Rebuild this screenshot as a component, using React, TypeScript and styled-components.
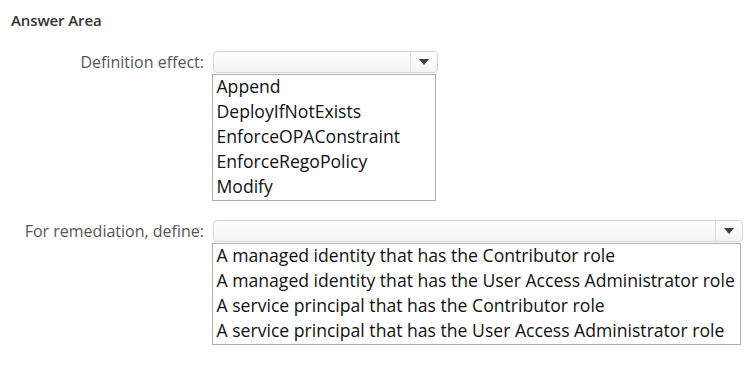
import React from 'react';
import styled, { createGlobalStyle } from 'styled-components';

const GlobalStyle = createGlobalStyle`
  html, body {
    margin: 0;
    padding: 0;
    background: #ffffff;
  }
  body {
    font-family: 'Open Sans', 'Noto Sans', Arial, sans-serif;
  }
`;

const Page = styled.div`
  width: 756px;
  height: 366px;
  box-sizing: border-box;
  padding: 10px 0 0 11px;
  background: #ffffff;
`;

const Title = styled.div`
  font-size: 15px;
  font-weight: 600;
  color: #333333;
  line-height: 21px;
  letter-spacing: -0.1px;
`;

const Form = styled.div`
  display: flex;
  flex-direction: column;
  gap: 19px;
  margin-top: 20px;
`;

const Field = styled.div`
  display: grid;
  grid-template-columns: 193px auto;
  column-gap: 8px;
  align-items: start;
`;

const Label = styled.div`
  text-align: right;
  font-size: 16px;
  color: #555555;
  line-height: 22px;
`;

const Control = styled.div<{ $width: number }>`
  display: flex;
  flex-direction: column;
  width: ${(p) => p.$width}px;
`;

const Select = styled.div`
  display: flex;
  height: 22px;
  box-sizing: border-box;
  margin-left: 1px;
  border: 1px solid #d4d4d4;
  border-radius: 4px;
  background: linear-gradient(#ffffff, #f3f3f3);
`;

const SelectValue = styled.div`
  flex: 1;
`;

const ArrowButton = styled.div`
  width: 26px;
  display: flex;
  align-items: center;
  justify-content: center;
  border-left: 1px solid #dcdcdc;
`;

const Arrow = styled.div`
  width: 0;
  height: 0;
  border-left: 5.5px solid transparent;
  border-right: 5.5px solid transparent;
  border-top: 6px solid #404040;
`;

const List = styled.div<{ $width: number }>`
  width: ${(p) => p.$width}px;
  box-sizing: border-box;
  margin-top: 1px;
  border: 1.5px solid #adadad;
  padding: 0 0 0 3.5px;
`;

const Option = styled.div`
  font-size: 17.6px;
  line-height: 25px;
  color: #111111;
  white-space: nowrap;
  margin-top: -1px;
  margin-bottom: 1px;
`;

const effects = ['Append', 'DeployIfNotExists', 'EnforceOPAConstraint', 'EnforceRegoPolicy', 'Modify'];

const remediations = [
  'A managed identity that has the Contributor role',
  'A managed identity that has the User Access Administrator role',
  'A service principal that has the Contributor role',
  'A service principal that has the User Access Administrator role',
];

const Dropdown: React.FC<{ width: number; listWidth: number; options: string[] }> = ({
  width,
  listWidth,
  options,
}) => (
  <Control $width={width}>
    <Select>
      <SelectValue />
      <ArrowButton>
        <Arrow />
      </ArrowButton>
    </Select>
    <List $width={listWidth}>
      {options.map((o) => (
        <Option key={o}>{o}</Option>
      ))}
    </List>
  </Control>
);

const App: React.FC = () => (
  <>
    <GlobalStyle />
    <Page>
      <Title>Answer Area</Title>
      <Form>
        <Field>
          <Label>Definition effect:</Label>
          <Dropdown width={226} listWidth={224} options={effects} />
        </Field>
        <Field>
          <Label>For remediation, define:</Label>
          <Dropdown width={531} listWidth={529} options={remediations} />
        </Field>
      </Form>
    </Page>
  </>
);

export default App;
